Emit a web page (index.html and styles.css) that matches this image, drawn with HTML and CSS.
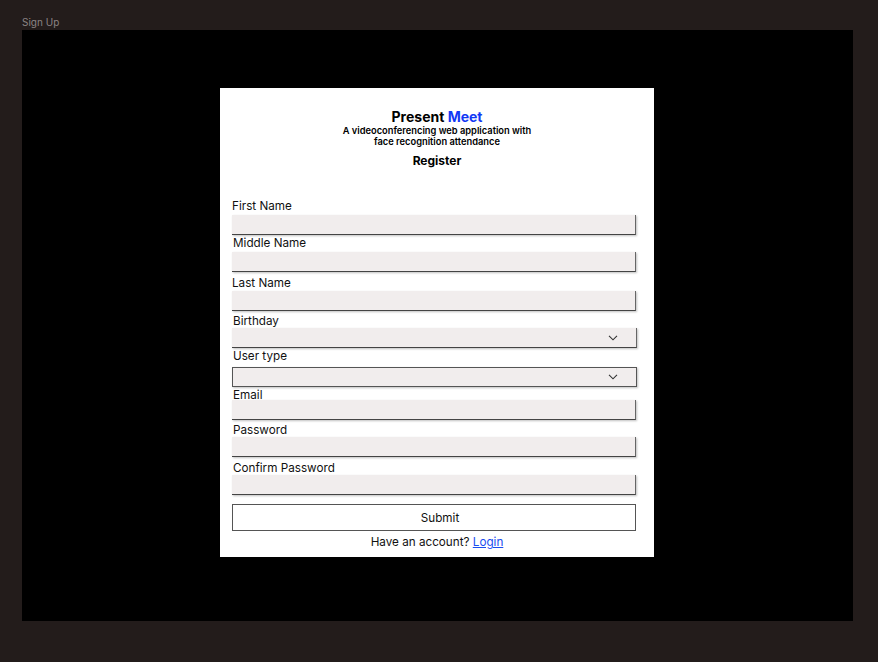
FILE: index.html
```html
<!DOCTYPE html>
<html>
<head>
<meta charset="utf-8">
<link rel="stylesheet" href="styles.css">
</head>
<body>
<div class="page">
  <div class="frame-title">Sign Up</div>
  <div class="frame">
    <div class="card">
      <div class="brand">Present <span class="accent">Meet</span></div>
      <div class="tagline">A videoconferencing web application with<br>face recognition attendance</div>
      <div class="heading">Register</div>
      <form class="form">
        <div class="field f1"><label>First Name</label><div class="input"></div></div>
        <div class="field f2"><label>Middle Name</label><div class="input"></div></div>
        <div class="field f3"><label>Last Name</label><div class="input"></div></div>
        <div class="field f4"><label>Birthday</label><div class="input select"><svg class="chev" width="10" height="6" viewBox="0 0 10 6"><path d="M1 0.8 L5 4.8 L9 0.8" fill="none" stroke="#333" stroke-width="1.1"/></svg></div></div>
        <div class="field f5"><label>User type</label><div class="input select boxed"><svg class="chev" width="10" height="6" viewBox="0 0 10 6"><path d="M1 0.8 L5 4.8 L9 0.8" fill="none" stroke="#333" stroke-width="1.1"/></svg></div></div>
        <div class="field f6"><label>Email</label><div class="input"></div></div>
        <div class="field f7"><label>Password</label><div class="input"></div></div>
        <div class="field f8"><label>Confirm Password</label><div class="input"></div></div>
        <div class="submit">Submit</div>
      </form>
      <div class="login">Have an account? <a href="#">Login</a></div>
    </div>
  </div>
</div>
</body>
</html>
```
FILE: styles.css
```css
* { box-sizing: border-box; }
html, body { margin: 0; padding: 0; }
body {
  background: #231c1b;
  font-family: Inter, "Noto Sans", sans-serif;
  width: 878px;
  height: 662px;
  overflow: hidden;
}
.page {
  padding: 16px 0 0 22px;
}
.frame-title {
  color: #8c8484;
  font-size: 10px;
  line-height: 12px;
  height: 14px;
}
.frame {
  width: 831px;
  height: 591px;
  background: #000;
  padding: 58px 0 0 198px;
}
.card {
  width: 434px;
  height: 469px;
  background: #fff;
  padding: 20px 0 0 0;
  display: flex;
  flex-direction: column;
  align-items: stretch;
}
.brand {
  text-align: center;
  font-weight: 700;
  font-size: 14px;
  line-height: 17px;
  color: #000;
}
.accent { color: #1238f5; }
.tagline {
  text-align: center;
  font-size: 9.3px;
  font-weight: 600;
  line-height: 11px;
  color: #000;
}
.heading {
  text-align: center;
  font-weight: 700;
  font-size: 12px;
  line-height: 15px;
  margin-top: 6px;
}
.form {
  display: flex;
  flex-direction: column;
  margin: 31px 18px 0 12px;
}
.field { display: flex; flex-direction: column; }
.field label {
  font-size: 11.7px;
  line-height: 15px;
  color: #111;
}
.input {
  height: 20px;
  background: #f1eded;
  border-right: 1px solid #666;
  border-bottom: 1px solid #444;
  box-shadow: 1px 1px 2px rgba(0,0,0,0.25);
  margin-top: 1px;
  display: flex;
  align-items: center;
  justify-content: flex-end;
  padding-right: 18px;
}
.select { width: 405px; }
.boxed { border: 1px solid #555; }
.f2 label, .f4 label, .f5 label, .f6 label, .f7 label, .f8 label { padding-left: 1px; }
.f2 { margin-top: 1px; }
.f3 { margin-top: 4px; }
.f3 .input { margin-top: 0; }
.f4 { margin-top: 3px; }
.f4 .input { margin-top: -1px; }
.f5 { margin-top: 1px; }
.f5 .input { margin-top: 3px; }
.f6 { margin-top: 1px; }
.f6 .input { margin-top: -3px; }
.f7 { margin-top: 3px; }
.f7 .input { margin-top: -1px; }
.f8 { margin-top: 4px; }
.f8 .input { margin-top: -1px; }
.chev { display: block; }
.submit {
  margin-top: 9px;
  height: 27px;
  border: 1px solid #555;
  background: #fff;
  font-size: 11.7px;
  display: flex;
  align-items: center;
  justify-content: center;
  padding-left: 12px;
  color: #111;
}
.login {
  text-align: center;
  font-size: 11.7px;
  line-height: 15px;
  margin-top: 4px;
  color: #111;
}
.login a { color: #1a4df0; text-decoration: underline; }
```
